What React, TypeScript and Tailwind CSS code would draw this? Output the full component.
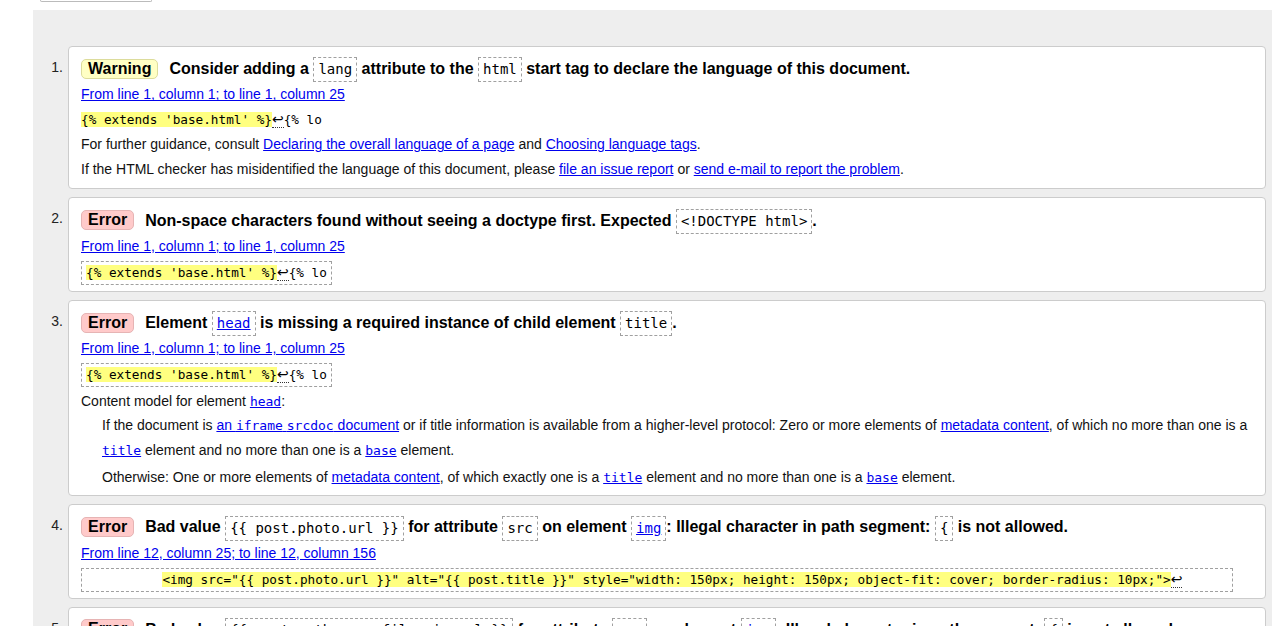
import React from 'react';

const mono = "font-['DejaVu_Sans_Mono',monospace]";

function Badge({ type }: { type: 'warning' | 'error' }) {
  return (
    <span
      className={
        type === 'warning'
          ? 'inline-block rounded-[5px] border border-[#dcdc9c] bg-[#ffffc4] px-[6px] leading-[18px] text-[16px] font-bold text-black align-middle'
          : 'inline-block rounded-[5px] border border-[#e6b4b4] bg-[#ffcaca] px-[6px] leading-[18px] text-[16px] font-bold text-black align-middle'
      }
    >
      {type === 'warning' ? 'Warning' : 'Error'}
    </span>
  );
}

// dashed code box used inside message titles
function Box({ children, link }: { children: React.ReactNode; link?: boolean }) {
  return (
    <code
      className={`inline-block border border-dashed border-[#a0a0a0] px-[4px] align-middle text-[14px] font-normal leading-[23px] ${mono} ${
        link ? 'text-[#0000ee] underline' : 'text-black'
      }`}
    >
      {children}
    </code>
  );
}

function A({ children, code }: { children: React.ReactNode; code?: boolean }) {
  return (
    <a href="#" className={`text-[#0000ee] underline ${code ? mono + ' text-[13px]' : ''}`}>
      {children}
    </a>
  );
}

function Extract({ pre, hl, post, boxed }: { pre?: string; hl: string; post: string; boxed?: boolean }) {
  return (
    <div className={boxed ? 'mt-[2px] leading-[22px]' : 'leading-[25px]'}>
      <code
        className={`whitespace-pre text-[12.7px] text-black ${mono} ${
          boxed ? 'inline-block border border-dashed border-[#a0a0a0] px-[4px]' : ''
        }`}
      >
        {pre}
        <span className="bg-[#ffff80]">{hl}</span>
        <span className="border-b border-dotted border-[#333] font-['DejaVu_Sans',sans-serif] text-[14px] leading-[14px]">↩</span>
        {post}
      </code>
    </div>
  );
}

function Item({ n, children, className = 'pb-[6px]' }: { n: number; children: React.ReactNode; className?: string }) {
  return (
    <li className="flex">
      <div className="w-[35px] shrink-0 pr-[5px] pt-[8px] text-right text-[14px] leading-[27px] text-[#222]">{n}.</div>
      <div className={`min-w-0 flex-1 rounded-[4px] border border-[#cccccc] bg-white px-[12px] pt-[7px] ${className}`}>
        {children}
      </div>
    </li>
  );
}

function Title({ type, children }: { type: 'warning' | 'error'; children: React.ReactNode }) {
  return (
    <p className="text-[16px] font-bold leading-[27px] text-black">
      <Badge type={type} />
      <span className="ml-[11px] align-middle">{children}</span>
    </p>
  );
}

function Loc({ children }: { children: React.ReactNode }) {
  return (
    <p className="leading-[25px]">
      <A>{children}</A>
    </p>
  );
}

export default function App() {
  return (
    <div className="min-h-screen bg-white font-['Liberation_Sans',Arial,sans-serif] text-[14px] text-[#111]">
      <div className="ml-[40px] h-[2px] w-[112px] rounded-b-[3px] border-x border-b border-[#bbbbbb]" />
      <div className="ml-[33px] mt-[8px] bg-[#eeeeee] pb-[20px] pr-[6px] pt-[36px]">
        <ol className="flex flex-col gap-[8px]">
          <Item n={1} className="pb-[6px]">
            <Title type="warning">
              Consider adding a <Box>lang</Box> attribute to the <Box>html</Box> start tag to declare the language of
              this document.
            </Title>
            <Loc>From line 1, column 1; to line 1, column 25</Loc>
            <Extract hl="{% extends 'base.html' %}" post="{% lo" />
            <p className="leading-[25px]">
              For further guidance, consult <A>Declaring the overall language of a page</A> and{' '}
              <A>Choosing language tags</A>.
            </p>
            <p className="leading-[25px]">
              If the HTML checker has misidentified the language of this document, please <A>file an issue report</A>{' '}
              or <A>send e-mail to report the problem</A>.
            </p>
          </Item>

          <Item n={2} className="pb-[6px]">
            <Title type="error">
              Non-space characters found without seeing a doctype first. Expected <Box>&lt;!DOCTYPE html&gt;</Box>.
            </Title>
            <Loc>From line 1, column 1; to line 1, column 25</Loc>
            <Extract boxed hl="{% extends 'base.html' %}" post="{% lo" />
          </Item>

          <Item n={3} className="pb-[5px]">
            <Title type="error">
              Element <Box link>head</Box> is missing a required instance of child element <Box>title</Box>.
            </Title>
            <Loc>From line 1, column 1; to line 1, column 25</Loc>
            <Extract boxed hl="{% extends 'base.html' %}" post="{% lo" />
            <p className="mt-[3px] leading-[22px]">
              Content model for element <A code>head</A>:
            </p>
            <div className="ml-[21px]">
              <p className="leading-[25px]">
                If the document is{' '}
                <a href="#" className="text-[#0000ee] underline">
                  an <span className={`${mono} text-[13px]`}>iframe</span>{' '}
                  <span className={`${mono} text-[13px]`}>srcdoc</span> document
                </a>{' '}
                or if title information is available from a higher-level protocol: Zero or more elements of{' '}
                <A>metadata content</A>, of which no more than one is a <A code>title</A> element and no more than one
                is a <A code>base</A> element.
              </p>
              <p className="mt-[2px] leading-[25px]">
                Otherwise: One or more elements of <A>metadata content</A>, of which exactly one is a{' '}
                <A code>title</A> element and no more than one is a <A code>base</A> element.
              </p>
            </div>
          </Item>

          <Item n={4} className="pb-[6px]">
            <Title type="error">
              Bad value <Box>{'{{ post.photo.url }}'}</Box> for attribute <Box>src</Box> on element{' '}
              <Box link>img</Box>: Illegal character in path segment: <Box>{'{'}</Box> is not allowed.
            </Title>
            <Loc>From line 12, column 25; to line 12, column 156</Loc>
            <Extract
              boxed
              pre="          "
              hl={'<img src="{{ post.photo.url }}" alt="{{ post.title }}" style="width: 150px; height: 150px; object-fit: cover; border-radius: 10px;">'}
              post="      "
            />
          </Item>

          <Item n={5} className="pb-[6px]">
            <Title type="error">
              Bad value <Box>{'{{ post.author.profile_pic.url }}'}</Box> for attribute <Box>src</Box> on element{' '}
              <Box link>img</Box>: Illegal character in path segment: <Box>{'{'}</Box> is not allowed.
            </Title>
            <Loc>From line 18, column 29; to line 18, column 160</Loc>
            <Extract
              boxed
              pre="          "
              hl={'<img src="{{ post.author.profile_pic.url }}" alt="{{ post.author }}" style="width: 40px; height: 40px;">'}
              post="      "
            />
          </Item>
        </ol>
      </div>
    </div>
  );
}
